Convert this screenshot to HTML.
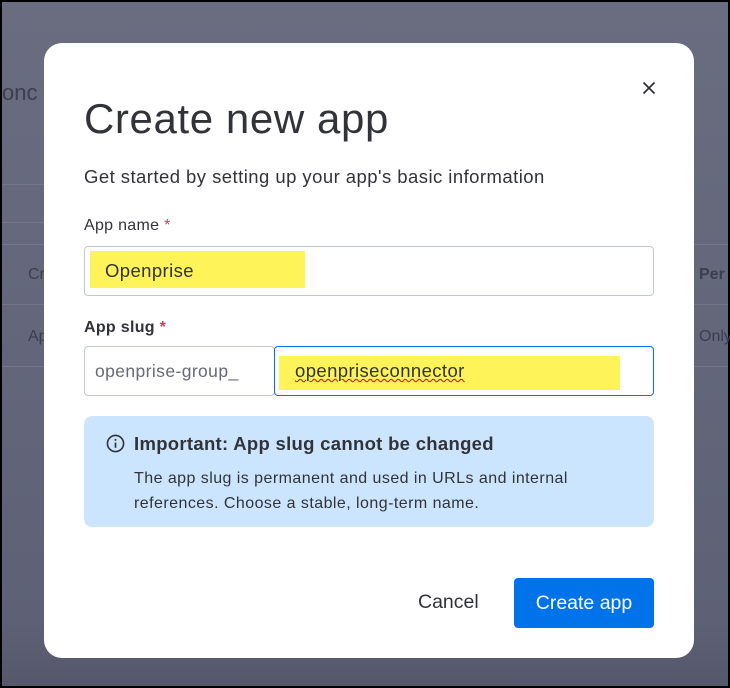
<!DOCTYPE html>
<html><head><style>
*{box-sizing:border-box;margin:0;padding:0}
body{width:730px;height:688px;overflow:hidden;background:#000;font-family:"Liberation Sans",sans-serif;position:relative}
.bg{position:absolute;left:2px;top:2px;width:726px;height:684px;background:linear-gradient(180deg,#6a6d80,#5e6175 90%,#55586b)}
.bgt{position:absolute;color:#3b3e4e;font-size:16px}
.line{position:absolute;left:2px;height:1px;background:#747789}
.modal{position:absolute;left:44px;top:43px;width:650px;height:615px;background:#fff;border-radius:18px}
.a{position:absolute}
h1{position:absolute;left:40px;top:52px;font-size:42px;font-weight:normal;color:#323338;letter-spacing:0.6px}
.sub{left:40px;top:123px;font-size:18.5px;color:#323338;letter-spacing:0.45px}
.lbl{font-size:16px;color:#323338;letter-spacing:0.3px}
.star{color:#d83a52}
.in{border:1px solid #c3c6d4;border-radius:4px}
.hl{background:#fff35a}
</style></head><body>
<div class="bg"></div>
<div class="bgt" style="left:2px;top:80px;font-size:22px">onc</div>
<div class="line" style="top:184px;width:42px"></div>
<div class="line" style="top:222px;width:42px"></div>
<div class="line" style="top:244px;width:726px"></div>
<div class="line" style="top:304px;width:726px"></div>
<div class="line" style="top:366px;width:726px"></div>
<div class="bgt" style="left:28px;top:266px">Cr</div>
<div class="bgt" style="left:28px;top:328px">Ap</div>
<div class="bgt" style="left:699px;top:266px;font-weight:bold">Per</div>
<div class="bgt" style="left:699px;top:328px">Only</div>
<div class="modal">
<svg class="a" style="left:598px;top:38px" width="14" height="14" viewBox="0 0 14 14"><path d="M1.5 1.5L12.5 12.5M12.5 1.5L1.5 12.5" stroke="#323338" stroke-width="1.8"/></svg>
<h1>Create new app</h1>
<div class="a sub">Get started by setting up your app's basic information</div>
<div class="a lbl" style="left:40px;top:174px">App name <span class="star">*</span></div>
<div class="a in" style="left:40px;top:203px;width:570px;height:50px"></div>
<div class="a hl" style="left:46px;top:208px;width:215px;height:37px"></div>
<div class="a" style="left:61px;top:217px;font-size:18.5px;color:#323338;letter-spacing:0.4px">Openprise</div>
<div class="a lbl" style="left:40px;top:276px;font-weight:bold">App slug <span class="star">*</span></div>
<div class="a in" style="left:40px;top:303px;width:191px;height:50px"></div>
<div class="a" style="left:51px;top:318px;font-size:17.5px;color:#676879;letter-spacing:0.4px">openprise-group_</div>
<div class="a" style="left:230px;top:303px;width:380px;height:50px;border:1px solid #0073ea;border-radius:4px"></div>
<div class="a hl" style="left:235px;top:313px;width:341px;height:34px"></div>
<div class="a" style="left:251px;top:317px;font-size:18.5px;color:#323338;letter-spacing:0.4px;text-decoration:underline wavy #e00;text-decoration-thickness:1px">openpriseconnector</div>
<div class="a" style="left:40px;top:373px;width:570px;height:111px;background:#cce5ff;border-radius:8px">
<svg class="a" style="left:22px;top:18px" width="19" height="19" viewBox="0 0 20 20"><circle cx="10" cy="10" r="8.5" fill="none" stroke="#323338" stroke-width="1.7"/><circle cx="10" cy="6.2" r="1.1" fill="#323338"/><path d="M10 9v5.5" stroke="#323338" stroke-width="1.8"/></svg>
<div class="a" style="left:50px;top:17px;font-size:18.5px;font-weight:bold;color:#323338;letter-spacing:0.3px">Important: App slug cannot be changed</div>
<div class="a" style="left:50px;top:50px;font-size:16px;line-height:25px;color:#323338;letter-spacing:0.45px">The app slug is permanent and used in URLs and internal<br>references. Choose a stable, long-term name.</div>
</div>
<div class="a" style="left:374px;top:548px;font-size:19.5px;color:#323338">Cancel</div>
<div class="a" style="left:470px;top:535px;width:140px;height:50px;background:#0073ea;border-radius:4px;color:#fff;font-size:19.5px;text-align:center;line-height:50px">Create app</div>
</div>
</body></html>
